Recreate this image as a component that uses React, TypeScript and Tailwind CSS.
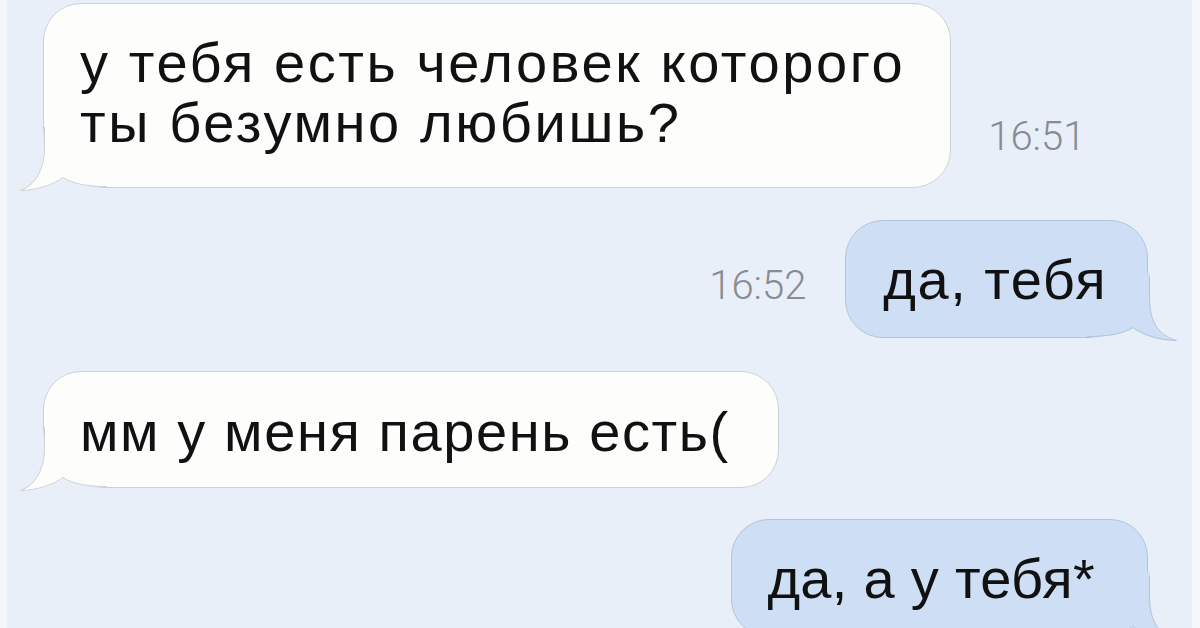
import React from "react";

const TailLeft = ({ fill, stroke }: { fill: string; stroke: string }) => (
  <svg
    className="absolute left-[-30px] bottom-[-12px] pointer-events-none"
    width="110"
    height="80"
    viewBox="0 0 110 80"
  >
    <path
      d="M30,4 L30,28 C30,50 22,66 7,72 C22,72 40,66 49,59 C60,66 75,68 95,68 L110,68 L110,4 Z"
      fill={fill}
    />
    <path
      d="M30.5,8 L30.5,28 C30.5,50 22,65.5 6.5,71.5 C22,71.5 40,65.5 49,58.5 C60,65.5 75,67.5 93,67.5"
      fill="none"
      stroke={stroke}
      strokeWidth="1"
    />
  </svg>
);

const TailRight = ({ fill, stroke }: { fill: string; stroke: string }) => (
  <svg
    className="absolute right-[-33px] bottom-[-12px] pointer-events-none -scale-x-100"
    width="110"
    height="80"
    viewBox="0 0 110 80"
  >
    <path
      d="M30,4 L30,28 C30,50 24,66 4,72 C20,72 38,66 47,59 C58,66 75,68 95,68 L110,68 L110,4 Z"
      fill={fill}
    />
    <path
      d="M30.5,8 L30.5,28 C30.5,50 24,65.5 3.5,71.5 C20,71.5 38,65.5 47,58.5 C58,65.5 75,67.5 93,67.5"
      fill="none"
      stroke={stroke}
      strokeWidth="1"
    />
  </svg>
);

const msgFont = { fontFamily: '"Liberation Sans", Arial, sans-serif' };
const timeFont = { fontFamily: 'Roboto, "Liberation Sans", sans-serif' };

export default function App() {
  return (
    <div className="w-[1200px] h-[628px] overflow-hidden flex bg-[#f2f5fa]">
      <div className="w-[7px] shrink-0 bg-[#f3f6fb]" />
      <div className="flex-1 flex flex-col bg-[#e9eff8]">
        {/* Row 1 */}
        <div className="flex items-end pt-[3px] pl-[36px]">
          <div className="relative bg-[#fdfdfc] border border-[#cdd1d7] rounded-[38px] rounded-bl-[60px] pl-[36px] pr-[45px] pt-[29px] pb-[34px]">
            <TailLeft fill="#fdfdfc" stroke="#cdd1d7" />
            <p
              className="relative z-10 text-[56px] leading-[60px] tracking-[2.6px] text-[#111111] whitespace-nowrap"
              style={msgFont}
            >
              у тебя есть человек которого
              <br />
              ты безумно любишь?
            </p>
          </div>
          <span
            className="ml-[37px] mb-[31px] text-[40px] leading-none font-light text-[#878b93]"
            style={timeFont}
          >
            16:51
          </span>
        </div>

        {/* Row 2 */}
        <div className="flex items-end justify-end mt-[32px] pr-[44px]">
          <span
            className="mr-[39px] mb-[32px] text-[40px] leading-none font-light text-[#878b93]"
            style={timeFont}
          >
            16:52
          </span>
          <div className="relative bg-[#cedff5] border border-[#b2c4dc] rounded-[38px] rounded-br-[60px] pl-[37px] pr-[40px] pt-[29px] pb-[27px]">
            <TailRight fill="#cedff5" stroke="#b2c4dc" />
            <p
              className="relative z-10 text-[56px] leading-[60px] tracking-[1.5px] text-[#111111] whitespace-nowrap"
              style={msgFont}
            >
              да, тебя
            </p>
          </div>
        </div>

        {/* Row 3 */}
        <div className="flex items-end mt-[33px] pl-[36px]">
          <div className="relative bg-[#fdfdfc] border border-[#cdd1d7] rounded-[38px] rounded-bl-[60px] pl-[36px] pr-[48px] pt-[30px] pb-[25px]">
            <TailLeft fill="#fdfdfc" stroke="#cdd1d7" />
            <p
              className="relative z-10 text-[56px] leading-[60px] tracking-[1.6px] text-[#111111] whitespace-nowrap"
              style={msgFont}
            >
              мм у меня парень есть(
            </p>
          </div>
        </div>

        {/* Row 4 */}
        <div className="flex items-end justify-end mt-[31px] pr-[44px]">
          <div className="relative bg-[#cedff5] border border-[#b2c4dc] rounded-[38px] rounded-br-[60px] pl-[35px] pr-[52px] pt-[29px] pb-[27px]">
            <TailRight fill="#cedff5" stroke="#b2c4dc" />
            <p
              className="relative z-10 text-[56px] leading-[60px] tracking-[0.3px] text-[#111111] whitespace-nowrap"
              style={msgFont}
            >
              да, а у тебя*
            </p>
          </div>
        </div>
      </div>
      <div className="w-[8px] shrink-0 bg-[#f3f6fb]" />
    </div>
  );
}
